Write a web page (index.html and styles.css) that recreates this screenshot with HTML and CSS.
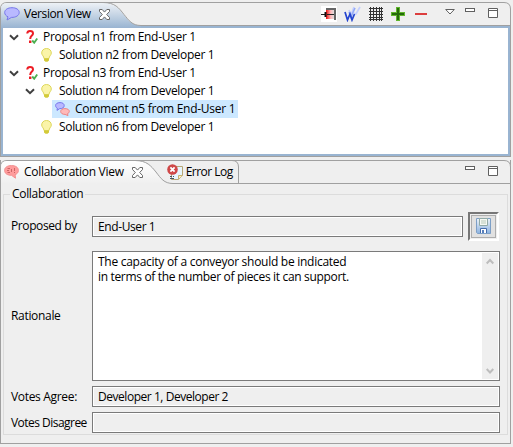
FILE: index.html
```html
<!DOCTYPE html>
<html lang="en">
<head>
<meta charset="utf-8">
<title>Version View</title>
<link rel="stylesheet" href="styles.css">
</head>
<body>
<svg class="defs" width="0" height="0">
  <defs>
    <symbol id="chev" viewBox="0 0 10 7"><path d="M1 1.2l4 4 4-4" fill="none" stroke="#404040" stroke-width="2"/></symbol>
    <symbol id="ask" viewBox="0 0 12 14"><path d="M1.2 3.500C1.400 1.600 2.600 1 4 1c1.900 0 3 .9 3 2.400C7 5.600 4.200 5.600 4.200 9" fill="none" stroke="#ed1c24" stroke-width="2"/><rect x="3" y="10.500" width="2.400" height="2.500" fill="#ed1c24"/><path d="M6.200 10.500l2 2.200 3-4.200" fill="none" stroke="#4caf50" stroke-width="1.900"/></symbol>
    <symbol id="bulb" viewBox="0 0 11 14"><path d="M5.500.5C2.500.5.700 2.500.700 5c0 2.200 2.300 3.200 2.300 5.500h5C8 8.200 10.300 7.200 10.300 5 10.300 2.500 8.500.5 5.500.5z" fill="#faf4a8" stroke="#ddd65a"/><path d="M3 10.500h5v2L6.500 13.700h-2L3 12.500z" fill="#d3ca38"/></symbol>
    <symbol id="close" viewBox="0 0 11 11"><path d="M.5.5h2.700l2.300 2.600L7.800.5h2.700v2L7.700 5.500l2.800 3v2H7.800L5.500 7.900l-2.300 2.600H.5v-2l2.800-3-2.800-3z" fill="#fff" stroke="#666"/></symbol>
    <symbol id="min" viewBox="0 0 10 4"><rect x=".5" y=".5" width="9" height="3" fill="#fff" stroke="#606060"/></symbol>
    <symbol id="max" viewBox="0 0 10 10"><path d="M.5.5h9v9h-9zM.5 2.500h9" fill="#fff" stroke="#606060"/></symbol>
  </defs>
</svg>

<section class="pane version">
  <header class="bar">
    <svg class="shape" width="511" height="26"><defs><linearGradient id="g" x2="0" y2="1"><stop stop-color="#edf1f6"/><stop offset="1" stop-color="#99b4d1"/></linearGradient></defs>
      <path d="M.5 26V7Q.5.5 7 .5H504Q510.500.5 510.500 7V26z" fill="#efefef" stroke="#a0a0a0"/>
      <path d="M1 26V7Q1 1 7 1H103C115 1 119 7 124 13C129 19 132 23.500 141 23.500H510V26z" fill="url(#g)"/>
      <path d="M141 24H510V26H141z" fill="#99b4d1"/>
      <path d="M103 .5C115 .5 119 6 124 12.500C129 18.500 132 23.500 141 23.500H510" fill="none" stroke="#a0a0a0"/></svg>
    <div class="tab"><svg class="tabicon" width="16" height="14" viewBox="0 0 16 14"><path d="M8 .7C3.700.7.700 2.700.700 5.500c0 2 1.500 3.600 3.300 4.300L3 13l4.500-2.600c4.300.1 7.700-1.900 7.700-4.900S12 .7 8 .7z" fill="#b9b9ff" stroke="#7676ea"/></svg><span class="t-version">Version View</span><svg class="close" width="11" height="11"><use href="#close"/></svg></div>
    <div class="tools">
      <svg width="16" height="16"><rect width="16" height="16" fill="#fff"/><defs><linearGradient id="r"><stop stop-color="#f01010"/><stop offset=".6" stop-color="#fbb"/><stop offset="1" stop-color="#ddd"/></linearGradient></defs><path d="M5 3h8v10H5z" fill="url(#r)"/><path d="M5 3h9v11" fill="none" stroke="#666" stroke-width="2"/><path d="M0 8.500h4M6 8.500h7" stroke="#222"/><path d="M4.500 6v5" stroke="#111" stroke-width="2"/></svg>
      <svg width="17" height="16" fill="none"><path d="M5 4l2 5 3-8M10 7l2 1 4-7" stroke="#c5d0ff" stroke-width="1.700"/><path d="M5 6l2 5 4-9" stroke="#92a9f6" stroke-width="1.600"/><path d="M1 6l2.500 8 2.500-6 2 6 2.500-6" stroke="#2344cf" stroke-width="1.700"/></svg>
      <svg width="14" height="14"><path d="M0 1.500h14M0 4.500h14M0 7.500h14M0 10.500h14M0 12.500h14M1.500 0v14M4.500 0v14M7.500 0v14M10.500 0v14M12.500 0v14" stroke="#333"/></svg>
      <svg width="14" height="14"><path d="M7 0v14M0 7h14" stroke="#60b62c" stroke-width="4"/><path d="M7 1v12M1 7h12" stroke="#256b0b" stroke-width="2"/></svg>
      <svg width="12" height="2"><rect width="12" height="2" fill="#dc3e3e"/></svg>
      <svg class="menu" width="10" height="6"><path d="M.7.5h8.600L5 5z" fill="#fff" stroke="#606060"/></svg>
      <svg class="min" width="10" height="4"><use href="#min"/></svg>
      <svg class="max" width="10" height="10"><use href="#max"/></svg>
    </div>
  </header>
  <div class="tree">
    <div class="row l0"><svg width="10" height="7"><use href="#chev"/></svg><svg class="ask" width="12" height="14"><use href="#ask"/></svg><span class="t-prop">Proposal n1 from End-User 1</span></div>
    <div class="row l1"><svg class="bulb" width="11" height="14"><use href="#bulb"/></svg><span class="t-sol">Solution n2 from Developer 1</span></div>
    <div class="row l0"><svg width="10" height="7"><use href="#chev"/></svg><svg class="ask" width="12" height="14"><use href="#ask"/></svg><span class="t-prop">Proposal n3 from End-User 1</span></div>
    <div class="row l1 open"><svg width="10" height="7"><use href="#chev"/></svg><svg class="bulb" width="11" height="14"><use href="#bulb"/></svg><span class="t-sol">Solution n4 from Developer 1</span></div>
    <div class="row sel"><svg width="15" height="14"><path d="M5 .6C2.300.6.600 1.800.600 3.600c0 1.200.7 2 1.700 2.600L2 8.400l2.500-1.700C7.500 6.800 9.200 5.500 9.200 3.600S7.500.6 5 .6z" fill="#b9b9ff" stroke="#7676ea"/><path d="M10 6.600c-2.600 0-4.300 1.100-4.300 2.900s1.800 2.900 4.300 2.900l3 1.200-.5-2c1.200-.5 1.800-1.200 1.800-2.100 0-1.800-1.700-2.900-4.300-2.900z" fill="#ffb9b9" stroke="#ec8585"/></svg><span class="t-com">Comment n5 from End-User 1</span></div>
    <div class="row l1"><svg class="bulb" width="11" height="14"><use href="#bulb"/></svg><span class="t-sol">Solution n6 from Developer 1</span></div>
  </div>
</section>

<section class="pane collab">
  <header class="bar">
    <svg class="shape" width="511" height="24"><defs><linearGradient id="w" x2="0" y2="1"><stop stop-color="#fff"/><stop offset="1" stop-color="#efefef"/></linearGradient></defs>
      <path d="M.5 24V7Q.5.5 7 .5H504Q510.500.5 510.500 7V24" fill="#efefef" stroke="#a0a0a0"/>
      <path d="M1 24V7Q1 1 7 1H135C147 1 151 7 156 13C161 19 164 24 173 24z" fill="url(#w)"/>
      <path d="M135 .5C147 .5 151 6 156 12C161 18.500 164 23.500 173 23.500H510M232 .5Q238.500.5 238.500 7V23" fill="none" stroke="#a0a0a0"/></svg>
    <div class="tab"><svg class="tabicon" width="15" height="14"><path d="M7.500.6C3.400.6.600 2.300.600 5.400s2.800 4.900 6.900 4.900l4 2.900-.4-3.500c2-.8 3.300-2.200 3.300-4.300 0-3.100-2.800-4.800-6.900-4.800z" fill="#ff9c9c" stroke="#f29090"/><path d="M3.500 3.500h2.500M3 5.500h2M3.500 7.500h2.500M7.500 4v3M10.500 3v3M10.500 7v1" fill="none" stroke="#c66" /></svg><span class="t-collab">Collaboration View</span><svg class="close" width="11" height="11"><use href="#close"/></svg></div>
    <div class="tab log"><svg width="16" height="16"><path d="M4.500 2.500h11v9l-4 4h-7z" fill="#e7f5fd" stroke="#b6a675"/><path d="M11.500 15v-3.500h4" fill="#fff2bd" stroke="#c5b172"/><path d="M3 12.500h2M6 12.500h1M3 14.500h4" stroke="#456"/><circle cx="5.500" cy="5.500" r="5.300" fill="#cf4747"/><path d="M3.400 3.400l4.200 4.200m0-4.200L3.400 7.600" stroke="#fff" stroke-width="1.800"/></svg><span class="t-log">Error Log</span></div>
    <div class="tools">
      <svg class="min" width="10" height="4"><use href="#min"/></svg>
      <svg class="max" width="10" height="10"><use href="#max"/></svg>
    </div>
  </header>
  <fieldset class="group">
    <legend><span class="t-group">Collaboration</span></legend>
    <div class="form">
      <label class="t-by">Proposed by</label>
      <div class="pair"><div class="field"><span class="t-end">End-User 1</span></div>
        <div class="save"><svg width="16" height="16"><defs><linearGradient id="s" x2="0" y2="1"><stop stop-color="#eef3f8"/><stop offset="1" stop-color="#8ab1e0"/></linearGradient></defs><path d="M.5.5h14v15h-13l-1-1z" fill="url(#s)" stroke="#7d9fc6"/><path d="M3.500.5h8v7h-8z" fill="#f5f8f3" stroke="#91aaa5"/><path d="M5 3h5M5 5h5" stroke="#b8c9b9"/><path d="M4.500 15v-4.500h6V15" fill="#fff" stroke="#456cac"/><path d="M6 12h2v3H6z" fill="#587fbc"/></svg></div></div>
      <label class="t-rat">Rationale</label>
      <div class="area"><div class="copy"><div class="t-l1">The capacity of a conveyor should be indicated</div><div class="t-l2">in terms of the number of pieces it can support.</div></div>
        <div class="scroll"><svg width="8" height="7"><path d="M.7 5.500L4 2l3.300 3.500" fill="none" stroke="#bdbdbd" stroke-width="2"/></svg><svg width="8" height="7"><path d="M.7 1L4 4.500 7.300 1" fill="none" stroke="#bdbdbd" stroke-width="2"/></svg></div></div>
      <label class="t-agree">Votes Agree:</label>
      <div class="field"><span class="t-devs">Developer 1, Developer 2</span></div>
      <label class="t-dis">Votes Disagree</label>
      <div class="field"></div>
    </div>
  </fieldset>
</section>
</body>
</html>
```

FILE: styles.css
```css
* { box-sizing: border-box; }
body {
  margin: 0;
  padding-top: 2px;
  width: 513px;
  height: 447px;
  overflow: hidden;
  background: #efefef;
  color: #000;
  font: 12px/18px "Open Sans", "Noto Sans", sans-serif;
  letter-spacing: -0.32px;
  white-space: nowrap;
}
svg { display: block; flex: none; }
.defs { position: absolute; }
.pane { width: 511px; }
.bar { position: relative; display: flex; }
.shape { position: absolute; top: 0; left: 0; }
.tab { position: relative; display: flex; align-items: center; height: 24px; padding-left: 4px; }
.tabicon { margin-right: 4px; }
.close { margin-left: 8px; }
.tools { position: relative; display: flex; align-items: center; margin-left: auto; padding-right: 13px; }

.t-version { letter-spacing: -0.4px; }
.t-com { letter-spacing: -0.28px; }
.t-collab { letter-spacing: -0.29px; }
.t-log { letter-spacing: -0.5px; }
.t-by { letter-spacing: -0.4px; }
.t-end { letter-spacing: -0.4px; }
.t-l1 { letter-spacing: -0.27px; }
.t-l2 { letter-spacing: -0.33px; }
.t-devs { letter-spacing: -0.46px; }
.t-dis { letter-spacing: -0.53px; }

.version { height: 154px; }
.version .bar { height: 26px; }
.version .tools { gap: 7px; height: 24px; }
.version .tools svg:nth-child(2) { margin-right: 1px; }
.version .tools svg:nth-child(4) { margin: 0 3px 0 1px; }
.version .menu { margin: -5px 3px 0 11px; }
.version .min { margin: -8px 6px 0 0; }
.version .max { margin-top: -2px; }
.tree { height: 128px; padding: 0 0 0 6px; background: #fff; border: solid #99b4d1; border-width: 0 2px 2px; outline: 1px solid #a0a0a0; clip-path: inset(0 -1px -1px -1px); margin: 0 1px; }
.row { display: flex; align-items: center; height: 18px; }
.ask { margin: 0 5px 0 7px; }
.bulb { margin-right: 7px; }
.l1 { padding-left: 32px; }
.open { padding-left: 16px; }
.open .bulb { margin-left: 6px; }
.sel { width: 186px; margin-left: 43px; padding-left: 3px; background: #cce8ff; }
.sel svg { margin-right: 5px; }

.collab { height: 284px; margin-top: 4px; border: solid #a0a0a0; border-width: 0 1px 1px; }
.collab .bar { height: 24px; margin: 0 -1px; }
.collab .tabicon { margin-right: 5px; }
.log { margin-left: 24px; padding-left: 0; }
.log svg { margin: -1px 3px 0 0; }
.collab .tools { gap: 13px; align-items: flex-start; padding-top: 6px; }
.group { height: 250px; margin: 1px 2px 0; padding: 0 7px; border: 1px solid #dcdcdc; }
.group legend { height: 18px; margin-left: -1px; padding: 0 2px; line-height: 18px; }
.form { display: grid; grid-template-columns: 81px 408px; grid-template-rows: 30px 10px 130px 5px 21px 5px 21px; align-items: center; margin-top: 8px; }
.form > :nth-child(-n+2) { grid-row: 1; }
.form > :nth-child(n+3):nth-child(-n+4) { grid-row: 3; }
.form > :nth-child(n+5):nth-child(-n+6) { grid-row: 5; }
.form > :nth-child(n+7) { grid-row: 7; }
.pair { display: flex; justify-content: space-between; align-items: center; }
.field { height: 21px; padding-left: 5px; border: 1px solid #7a7a7a; line-height: 19px; box-shadow: inset 0 0 0 1px #fff; }
.pair .field { width: 371px; }
.save { display: flex; align-items: center; justify-content: center; width: 31px; height: 29px; margin-right: 1px; border: 2px solid; border-color: #777 #fff #fff #777; background: #e1e1e1; box-shadow: inset 0 0 0 1px #efefef, inset 0 0 0 2px #adadad; }
.area { display: flex; justify-content: space-between; height: 130px; border: 1px solid #7a7a7a; background: #fff; padding: 1px 1px 1px 5px; }
.copy { padding-top: 1px; line-height: 15px; }
.scroll { display: flex; flex-direction: column; justify-content: space-between; align-items: center; width: 16px; padding: 5px 0 4px; background: #efefef; }
```
